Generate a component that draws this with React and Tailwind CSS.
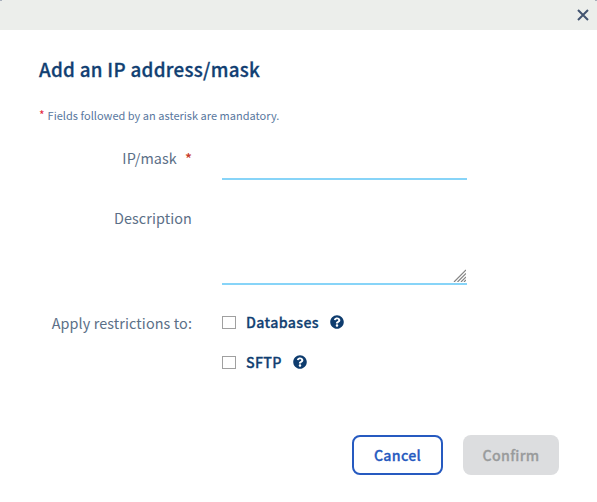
import { FaQuestionCircle } from "react-icons/fa";

function Option({ label }) {
  return (
    <div className="flex h-10 items-center">
      <input type="checkbox" aria-label={label} className="h-[13px] w-[14px] shrink-0 appearance-none border border-[#a0a0a0] bg-white" />
      <span className="ml-2.5 text-[14.2px] leading-5 font-medium tracking-[0.35px] text-[#113f72] [-webkit-text-stroke:0.3px_#113f72]">{label}</span>
      <FaQuestionCircle className="ml-[11px] size-3.5 text-[#0e3c6e]" />
    </div>
  );
}

export default function App() {
  return (
    <div className="relative flex h-[502px] w-[597px] flex-col overflow-hidden bg-white font-['Noto_Sans_CJK_SC','Noto_Sans',sans-serif] text-[#5b6f87]">
      <header className="flex h-[30px] shrink-0 items-center justify-end bg-[#eceeeb] pr-2">
        <button aria-label="Close">
          <svg viewBox="0 0 12 12" className="size-3 fill-none stroke-[#425470] stroke-2">
            <path d="M1 1L11 11M11 1L1 11" />
          </svg>
        </button>
      </header>
      <span className="absolute top-0 left-0 h-px w-0.5 bg-[#a9b0bc]" />
      <span className="absolute top-0 right-0 h-px w-0.5 bg-[#a9b0bc]" />
      <main className="flex flex-col pl-[39px]">
        <h1 className="mt-[25px] text-[18.8px] leading-7 font-medium tracking-[0.29px] whitespace-nowrap text-[#113f72] [-webkit-text-stroke:0.3px_#113f72]">
          <span>Add an IP address/mask</span>
        </h1>
        <p className="mt-[22px] text-[11px] leading-5 text-[#58779e]">
          <span className="mr-[3px] text-[12px] text-[#e5283c]">*</span>
          <span className="tracking-[0.02px]">Fields followed by an asterisk are mandatory.</span>
        </p>
        <div className="mt-[23px] flex h-[32px]">
          <label className="w-[153px] text-right text-[14.4px] leading-5 tracking-[0.1px]">
            IP/mask<span className="ml-2 font-medium text-[#c83c28]">*</span>
          </label>
          <input aria-label="IP/mask" className="ml-[30px] w-[245px] border-b-2 border-[#87d4f8] outline-none" />
        </div>
        <div className="mt-[28px] flex h-[77px]">
          <label className="w-[153px] text-right text-[14.4px] leading-5 tracking-[0.1px]">Description</label>
          <div className="ml-[30px] flex w-[245px] items-end justify-end border-b-2 border-[#87d4f8] pr-px pb-px">
            <svg viewBox="0 0 13 13" className="size-[13px] fill-none stroke-[#858585] stroke-[1.2]">
              <path d="M1 13L13 1M4.5 13L13 4.5M8 13L13 8M11 13L13 11" />
            </svg>
          </div>
        </div>
        <div className="mt-[17px] flex">
          <span className="mt-[11px] w-[153px] text-right text-[14.4px] leading-5 tracking-[0.1px]">Apply restrictions to:</span>
          <div className="ml-[30px]">
            <Option label="Databases" />
            <Option label="SFTP" />
          </div>
        </div>
      </main>
      <footer className="mt-[53px] flex justify-end gap-5 pr-[38px] text-[14.2px] font-medium tracking-[0.3px]">
        <button className="h-10 w-[91px] rounded-lg border-2 border-[#265ac0] pt-0.5 text-[#265ac0] [-webkit-text-stroke:0.3px_#265ac0]">Cancel</button>
        <button className="h-10 w-24 rounded-lg bg-[#dcdddf] pt-0.5 text-[#999b9c] [-webkit-text-stroke:0.3px_#999b9c]">Confirm</button>
      </footer>
    </div>
  );
}
